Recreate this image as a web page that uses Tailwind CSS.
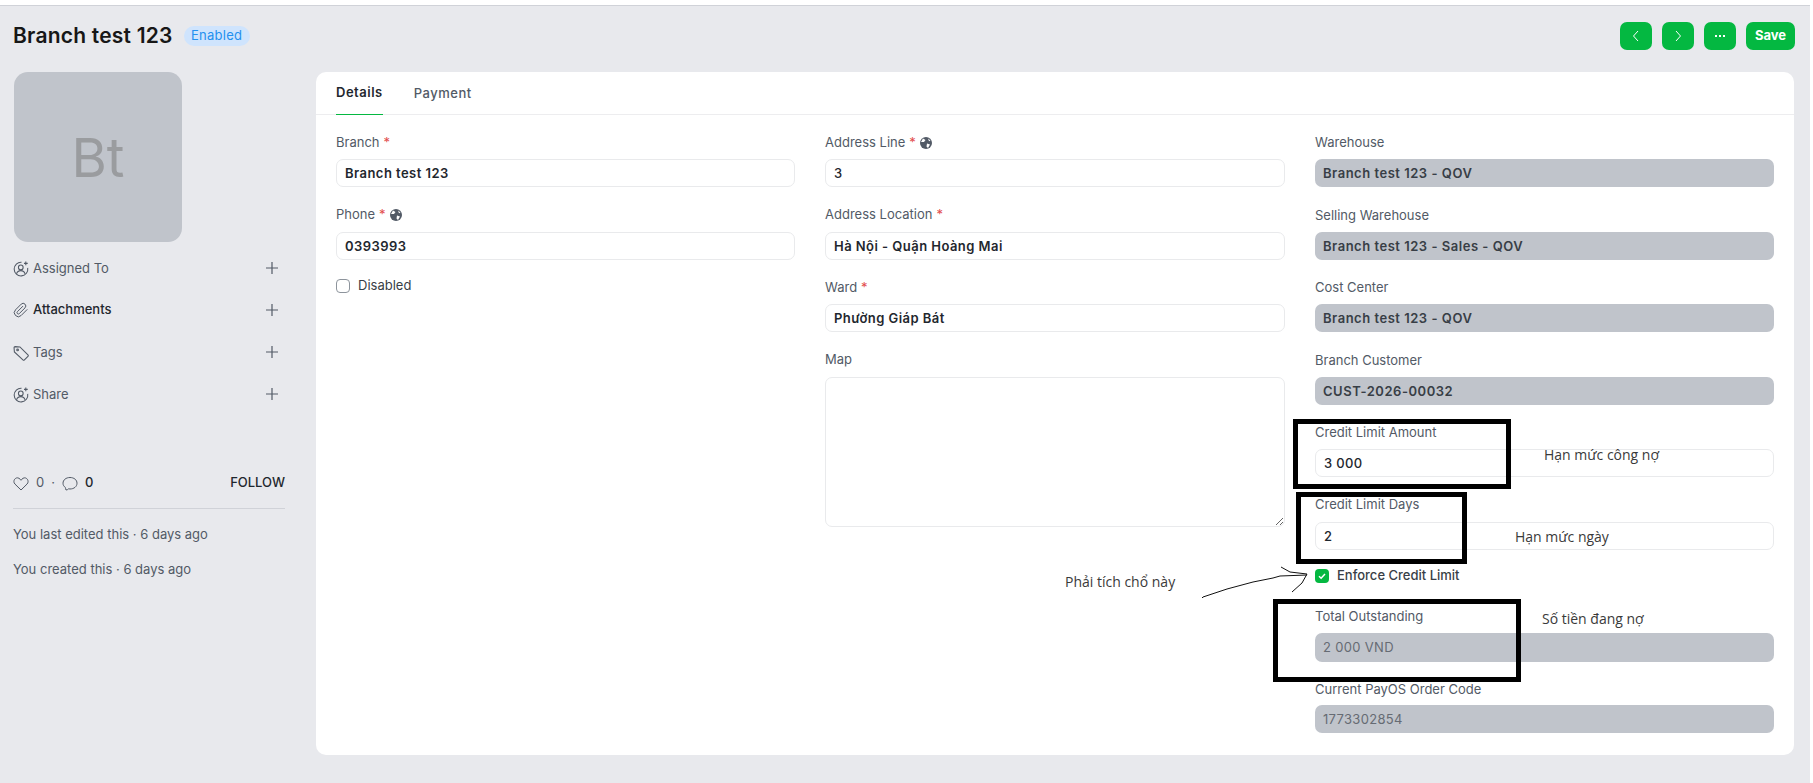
<!DOCTYPE html>
<html lang="en">
  <head>
    <meta charset="UTF-8" />
    <title>Branch test 123</title>
    <script src="https://cdn.jsdelivr.net/npm/@tailwindcss/browser@4"></script>
  </head>

  <body class="relative h-[783px] w-[1813px] overflow-hidden bg-white font-['Inter',sans-serif] text-[13px] text-[#525a66]">
    <div class="mr-[3px] mt-[5px] h-[778px] border-t border-[#d0d2d8] bg-[#e8e9ed] pl-[13px] pr-[15px]">
      <!-- Page head -->
      <div class="flex h-[66px] items-center pb-[6px]">
        <h1 class="text-[21px] font-semibold tracking-[0.01em] text-[#171717]">Branch test 123</h1>
        <span class="ml-[11px] flex h-[20px] w-[66px] items-center justify-center rounded-full bg-[#cfe4fd] text-[13px] tracking-[0.02em] text-[#2490ef]">Enabled</span>
        <div class="ml-auto flex items-center gap-[10px] text-white">
          <button class="flex h-[28px] w-[32px] items-center justify-center rounded-[7px] bg-[#04b841]">
            <svg width="16" height="16" viewBox="0 0 16 16" fill="none" stroke="currentColor" stroke-width="1"><path d="M10 3 5.500 8l4.500 5" /></svg>
          </button>
          <button class="flex h-[28px] w-[32px] items-center justify-center rounded-[7px] bg-[#04b841]">
            <svg width="16" height="16" viewBox="0 0 16 16" fill="none" stroke="currentColor" stroke-width="1"><path d="M6 3l4.500 5L6 13" /></svg>
          </button>
          <button class="flex h-[28px] w-[32px] items-center justify-center gap-[2px] rounded-[7px] bg-[#04b841]">
            <span class="size-[2px] bg-white"></span><span class="size-[2px] bg-white"></span><span class="size-[2px] bg-white"></span>
          </button>
          <button class="h-[28px] w-[49px] rounded-[7px] bg-[#04b841] text-[13px] font-bold">Save</button>
        </div>
      </div>

      <div class="flex gap-[31px]">
        <!-- Sidebar -->
        <aside class="w-[272px] shrink-0">
          <div class="ml-px flex h-[170px] w-[168px] items-center justify-center rounded-[14px] bg-[#c0c4cb] text-[54px] text-[#9a9c9f]">Bt</div>

          <div class="mt-[7px] flex h-[38px] items-center justify-between pr-[6px]">
            <span class="flex items-center gap-[4px] pt-px">
              <svg width="16" height="16" viewBox="0 0 15 15" fill="none" stroke="#525a66"><path d="M8 1.200A6.400 6.400 0 1 0 13.800 6.500" /><circle cx="7.300" cy="6" r="2.200" /><path d="M3.300 12c.6-2 2.200-3 4-3s3.400 1 4 3" /><path d="M12 .5v3.500M10.300 2.200h3.500" /></svg>
              Assigned To
            </span>
            <svg width="14" height="14" viewBox="0 0 14 14" stroke="#525a66" stroke-width="1.200"><path d="M7 1v12M1 7h12" /></svg>
          </div>
          <div class="mt-[4px] flex h-[38px] items-center justify-between pr-[6px]">
            <span class="flex items-center gap-[4px] font-medium text-[#1f272e]">
              <svg width="16" height="16" viewBox="0 0 24 24" fill="none" stroke="#525a66" stroke-width="1.500"><path d="m21.440 11.050-9.190 9.190a6 6 0 0 1-8.490-8.490l8.570-8.570A4 4 0 1 1 18 8.840l-8.590 8.570a2 2 0 0 1-2.830-2.830l8.490-8.480" /></svg>
              Attachments
            </span>
            <svg width="14" height="14" viewBox="0 0 14 14" stroke="#525a66" stroke-width="1.200"><path d="M7 1v12M1 7h12" /></svg>
          </div>
          <div class="mt-[4px] flex h-[38px] items-center justify-between pr-[6px]">
            <span class="flex items-center gap-[4px] pt-px">
              <svg width="16" height="16" viewBox="0 0 15 15" fill="none" stroke="#525a66"><path d="M1 2.500A1 1 0 0 1 2 1.500l4.500.3 7.500 7.500a1 1 0 0 1 0 1.400l-3.300 3.300a1 1 0 0 1-1.400 0L1.300 6.500z" /><circle cx="4.300" cy="4.600" r=".8" /></svg>
              Tags
            </span>
            <svg width="14" height="14" viewBox="0 0 14 14" stroke="#525a66" stroke-width="1.200"><path d="M7 1v12M1 7h12" /></svg>
          </div>
          <div class="mt-[4px] flex h-[38px] items-center justify-between pr-[6px]">
            <span class="flex items-center gap-[4px] pt-px">
              <svg width="16" height="16" viewBox="0 0 15 15" fill="none" stroke="#525a66"><path d="M8 1.200A6.400 6.400 0 1 0 13.800 6.500" /><circle cx="7.300" cy="6" r="2.200" /><path d="M3.300 12c.6-2 2.200-3 4-3s3.400 1 4 3" /><path d="M12 .5v3.500M10.300 2.200h3.500" /></svg>
              Share
            </span>
            <svg width="14" height="14" viewBox="0 0 14 14" stroke="#525a66" stroke-width="1.200"><path d="M7 1v12M1 7h12" /></svg>
          </div>

          <div class="mt-[58px] flex h-[24px] items-center justify-between">
            <span class="flex items-center">
              <svg width="16" height="15" viewBox="0 0 16 15" fill="none" stroke="#525a66"><path d="M8 14 1.900 8C-.8 5 2.600.3 6 2.300c1 .6 1.500 1.300 2 2 .5-.7 1-1.400 2-2 3.400-2 6.800 2.700 4.100 5.700z" /></svg>
              <span class="ml-[7px]">0</span>
              <span class="ml-[7px]">·</span>
              <svg class="ml-[7px]" width="16" height="15" viewBox="0 0 16 15" fill="none" stroke="#525a66"><path d="M4 14c1 0 2-.5 2.600-1.200.5.100.9.200 1.400.200 3.900 0 7-2.400 7-5.800S11.900 1.500 8 1.500 1 3.900 1 7.200c0 1.800.9 3.300 2.400 4.300.2.800.2 1.600.6 2.500z" /></svg>
              <span class="ml-[7px] font-medium text-[#1f272e]">0</span>
            </span>
            <span class="font-medium text-[#1f272e]">FOLLOW</span>
          </div>
          <div class="mt-[13px] border-t border-[#d0d2d8] pt-[16px]">
            <p class="h-[35px]">You last edited this · 6 days ago</p>
            <p>You created this · 6 days ago</p>
          </div>
        </aside>

        <!-- Form card -->
        <main class="w-[1478px] rounded-[10px] bg-white">
          <div class="flex h-[43px] gap-[31px] border-b border-[#ededef] px-[20px]">
            <span class="flex h-[43px] items-center border-b border-[#04b841] font-semibold tracking-[0.04em] text-[#1f272e]">Details</span>
            <span class="flex h-[43px] items-center pt-px font-medium tracking-[0.04em]">Payment</span>
          </div>

          <div class="flex gap-[30px] px-[20px] pt-[18px] pb-[3.5px]">
            <!-- Column 1 -->
            <div class="w-[459px]">
              <div class="h-[72.5px]">
                <label class="flex h-[18px] items-center pt-px">Branch <span class="ml-1 text-[#e24c4c]">*</span></label>
                <input class="mt-[8px] h-[28px] w-full rounded-[7px] border border-[#e9eaec] px-[8px] font-semibold tracking-[0.035em] text-[#1f272e]" value="Branch test 123" />
              </div>
              <div class="h-[72.5px]">
                <label class="flex h-[18px] items-center pt-px">Phone <span class="ml-1 text-[#e24c4c]">*</span>
                  <svg class="ml-[4px]" width="12" height="12" viewBox="0 0 12 12"><circle cx="6" cy="6" r="6" fill="#525a66" /><path d="M3 1.500 5.500 3 4 5 1 5zM7 6.500l3 1-2 3.500-1.500-1.500zM8 1.500l2.500 2-1.500.8z" fill="#fff" /></svg>
                </label>
                <input class="mt-[8px] h-[28px] w-full rounded-[7px] border border-[#e9eaec] px-[8px] font-semibold tracking-[0.035em] text-[#1f272e]" value="0393993" />
              </div>
              <div class="-mt-[2px] flex items-center gap-[8px] text-[#383e46]">
                <span class="size-[14px] rounded-[4px] border border-[#8d949c] bg-white"></span>
                Disabled
              </div>
            </div>

            <!-- Column 2 -->
            <div class="w-[460px]">
              <div class="h-[72.5px]">
                <label class="flex h-[18px] items-center pt-px">Address Line <span class="ml-1 text-[#e24c4c]">*</span>
                  <svg class="ml-[4px]" width="12" height="12" viewBox="0 0 12 12"><circle cx="6" cy="6" r="6" fill="#525a66" /><path d="M3 1.500 5.500 3 4 5 1 5zM7 6.500l3 1-2 3.500-1.500-1.500zM8 1.500l2.500 2-1.500.8z" fill="#fff" /></svg>
                </label>
                <input class="mt-[8px] h-[28px] w-full rounded-[7px] border border-[#e9eaec] px-[8px] font-medium text-[#1f272e]" value="3" />
              </div>
              <div class="h-[72.5px]">
                <label class="flex h-[18px] items-center pt-px">Address Location <span class="ml-1 text-[#e24c4c]">*</span></label>
                <input class="mt-[8px] h-[28px] w-full rounded-[7px] border border-[#e9eaec] px-[8px] font-semibold tracking-[0.035em] text-[#1f272e]" value="Hà Nội - Quận Hoàng Mai" />
              </div>
              <div class="h-[72.5px]">
                <label class="flex h-[18px] items-center pt-px">Ward <span class="ml-1 text-[#e24c4c]">*</span></label>
                <input class="mt-[8px] h-[28px] w-full rounded-[7px] border border-[#e9eaec] px-[8px] font-semibold tracking-[0.035em] text-[#1f272e]" value="Phường Giáp Bát" />
              </div>
              <div>
                <label class="flex h-[18px] items-center pt-px">Map</label>
                <textarea class="mt-[8px] block h-[150px] w-full rounded-[7px] border border-[#e9eaec]"></textarea>
              </div>
            </div>

            <!-- Column 3 -->
            <div class="w-[459px]">
              <div class="h-[72.5px]">
                <label class="flex h-[18px] items-center pt-px">Warehouse</label>
                <input class="mt-[8px] h-[28px] w-full rounded-[7px] bg-[#c0c4cb] px-[8px] font-semibold tracking-[0.04em] text-[#383e46]" value="Branch test 123 - QOV" />
              </div>
              <div class="h-[72.5px]">
                <label class="flex h-[18px] items-center pt-[3px]">Selling Warehouse</label>
                <input class="mt-[8px] h-[28px] w-full rounded-[7px] bg-[#c0c4cb] px-[8px] font-semibold tracking-[0.04em] text-[#383e46]" value="Branch test 123 - Sales - QOV" />
              </div>
              <div class="h-[72.5px]">
                <label class="flex h-[18px] items-center pt-px">Cost Center</label>
                <input class="mt-[8px] h-[28px] w-full rounded-[7px] bg-[#c0c4cb] px-[8px] font-semibold tracking-[0.04em] text-[#383e46]" value="Branch test 123 - QOV" />
              </div>
              <div class="h-[72.5px]">
                <label class="flex h-[18px] items-center pt-[3px]">Branch Customer</label>
                <input class="mt-[8px] h-[28px] w-full rounded-[7px] bg-[#c0c4cb] px-[8px] font-semibold tracking-[0.04em] text-[#383e46]" value="CUST-2026-00032" />
              </div>
              <div class="h-[72.5px]">
                <label class="flex h-[18px] items-center pt-px">Credit Limit Amount</label>
                <input class="mt-[8px] h-[28px] w-full rounded-[7px] border border-[#e9eaec] px-[8px] font-medium tracking-[0.025em] text-[#1f272e]" value="3 000" />
              </div>
              <div class="h-[72.5px]">
                <label class="flex h-[18px] items-center pt-px">Credit Limit Days</label>
                <input class="mt-[8px] h-[28px] w-full rounded-[7px] border border-[#e9eaec] px-[8px] font-medium text-[#1f272e]" value="2" />
              </div>
              <div class="flex h-[38.5px] items-start gap-[8px] pt-px font-medium text-[#383e46]">
                <span class="flex size-[14px] items-center justify-center rounded-[4px] bg-[#04b841]">
                  <svg width="10" height="10" viewBox="0 0 10 10" fill="none" stroke="#fff" stroke-width="1.500"><path d="m2 5.300 2.100 2L8 3" /></svg>
                </span>
                <span class="-mt-[3px]">Enforce Credit Limit</span>
              </div>
              <div class="h-[72.5px]">
                <label class="flex h-[18px] items-center pt-[3px]">Total Outstanding</label>
                <input class="mt-[8px] h-[29px] w-full rounded-[7px] bg-[#c0c4cb] px-[8px] tracking-[0.025em] text-[#666b73]" value="2 000 VND" />
              </div>
              <div class="h-[72.5px]">
                <label class="flex h-[18px] items-center pt-[3px]">Current PayOS Order Code</label>
                <input class="mt-[8px] h-[28px] w-full rounded-[7px] bg-[#c0c4cb] px-[8px] tracking-[0.025em] text-[#666b73]" value="1773302854" />
              </div>
            </div>
          </div>
        </main>
      </div>
    </div>

    <!-- Hand-drawn annotations on top of the screenshot -->
    <div class="absolute left-[1293px] top-[419px] h-[70px] w-[218px] border-[5px] border-black"></div>
    <div class="absolute left-[1296px] top-[492px] h-[72px] w-[171px] border-[5px] border-black"></div>
    <div class="absolute left-[1273px] top-[599px] h-[83px] w-[248px] border-[5px] border-black"></div>
    <span class="absolute left-[1544px] top-[444px] font-['Open_Sans',sans-serif] text-[14px] text-[#3a3a3a]">Hạn mức công nợ</span>
    <span class="absolute left-[1515px] top-[526px] font-['Open_Sans',sans-serif] text-[14px] text-[#3a3a3a]">Hạn mức ngày</span>
    <span class="absolute left-[1065px] top-[571px] font-['Open_Sans',sans-serif] text-[14px] text-[#3a3a3a]">Phải tích chổ này</span>
    <span class="absolute left-[1542px] top-[608px] font-['Open_Sans',sans-serif] text-[14px] text-[#3a3a3a]">Số tiền đang nợ</span>
    <svg class="absolute left-[1195px] top-[560px]" width="120" height="45" viewBox="1195 560 120 45" fill="none" stroke="#111" stroke-width="1">
      <path d="M1202 598l1-1 24-8 26-7 20-4 7-2 27-1M1281 567l9 5 17 2-5 9-10 9" />
    </svg>
  </body>
</html>
